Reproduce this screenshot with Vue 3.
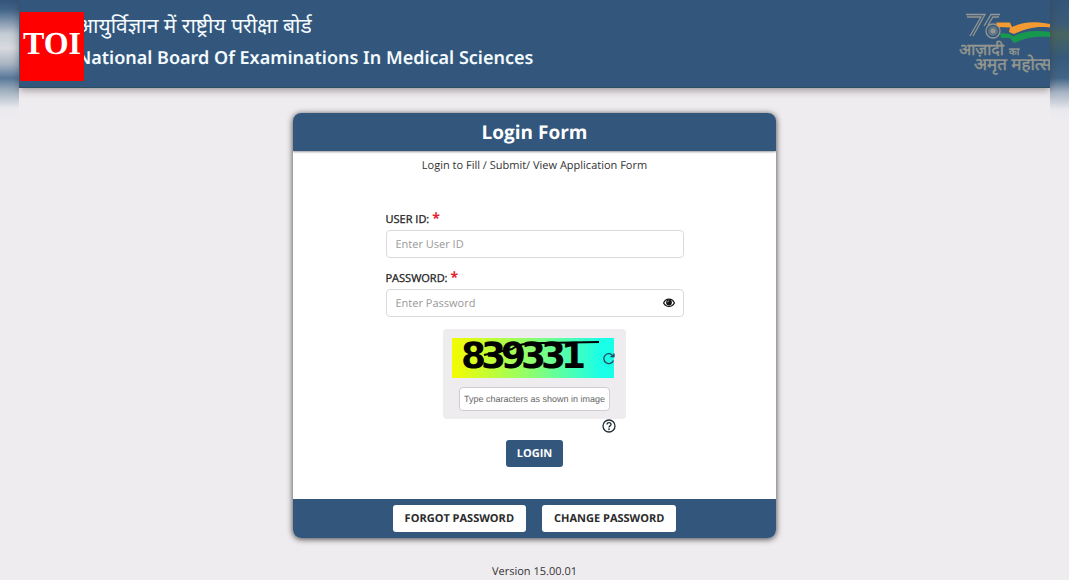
<script setup>
import { ref } from 'vue'

const userId = ref('')
const password = ref('')
const captcha = ref('')
const revealed = ref(false)
const captchaDigits = ['8', '3', '9', '3', '3', '1']
</script>

<template>
  <div class="page">
    <div class="edge edge-left" aria-hidden="true"></div>

    <div class="site">
      <header class="banner">
        <div class="titles">
          <p class="title-hindi" lang="hi">आयुर्विज्ञान में राष्ट्रीय परीक्षा बोर्ड</p>
          <h1 class="title-english">National Board Of Examinations In Medical Sciences</h1>
        </div>
        <div class="toi">TOI</div>
        <svg class="emblem" width="93" height="66" viewBox="0 0 93 66" role="img" aria-label="Azadi ka Amrit Mahotsav">
          <g fill="none" stroke="#95978f" stroke-width="1.3">
            <path d="M9 2.500H28L16 24M10 5H24L13 24" />
            <path d="M43 2.500H34L27 14M42 5H36L31 13" />
            <circle cx="36" cy="19" r="7" />
          </g>
          <circle cx="36" cy="19" r="5" fill="#95978f" opacity=".45" />
          <circle cx="36" cy="19" r="2.500" fill="#95978f" />
          <path d="M39 10.500L53 10.500L55 15C66 10 76 9 93 12V15.500C77 14 69 17 57 22L52 20L53 15.500L41 15Z" fill="#f49a32" />
          <path d="M43 21L53 22L56 24.500C67 19 77 18 93 20V25C77 24 69 26 57 31L53 26L44 26Z" fill="#16994f" />
          <g class="emblem-text" lang="hi">
            <text x="2" y="43" font-size="16">आज़ादी</text>
            <text x="52" y="43" font-size="10">का</text>
            <text x="17" y="58" font-size="17">अमृत महोत्स</text>
          </g>
        </svg>
      </header>

      <main class="content">
        <form class="card" @submit.prevent>
          <h2 class="card-head">Login Form</h2>
          <div class="card-body">
            <p class="intro">Login to Fill / Submit/ View Application Form</p>
            <div class="fields">
              <div class="field">
                <label for="user-id">USER ID: <span class="required">*</span></label>
                <input id="user-id" v-model="userId" class="box" type="text" placeholder="Enter User ID" />
              </div>
              <div class="field">
                <label for="password">PASSWORD: <span class="required">*</span></label>
                <div class="password-box">
                  <input id="password" v-model="password" class="box" :type="revealed ? 'text' : 'password'" placeholder="Enter Password" />
                  <button class="icon-button eye" type="button" aria-label="Show password" @click="revealed = !revealed">
                    <svg width="12" height="10" viewBox="0 0 12 10">
                      <path d="M.6 5C3-.1 9-.1 11.400 5C9 9.600 3 9.600 .6 5Z" fill="#fff" stroke="#151515" stroke-width="1.200" />
                      <circle cx="6" cy="4.500" r="2.900" fill="#151515" />
                      <path d="M4.500 4.300C4.500 3.400 5 2.900 5.900 2.900" fill="none" stroke="#fff" stroke-width=".6" />
                    </svg>
                  </button>
                </div>
              </div>
            </div>

            <div class="captcha">
              <div class="captcha-picture">
                <svg width="150" height="40" viewBox="0 0 150 40" role="img" aria-label="Verification code">
                  <text class="captcha-digits" y="30">
                    <tspan v-for="(digit, i) in captchaDigits" :key="i" :x="9 + i * 20">{{ digit }}</tspan>
                  </text>
                  <path d="M32 17L60 11C68 5 79 5 92 5L147 4" fill="none" stroke="#000" stroke-width="2" />
                </svg>
                <button class="icon-button refresh" type="button" aria-label="New code">
                  <svg width="13" height="13" viewBox="0 0 13 13" fill="none" stroke="#24465a" stroke-width="1.300">
                    <path d="M11 3.800A5 5 0 1 0 11.500 8.500M12 1.500V4.500H8.500" />
                  </svg>
                </button>
              </div>
              <input v-model="captcha" class="captcha-input" type="text" aria-label="Verification code" placeholder="Type characters as shown in image" />
            </div>
            <div class="help-row">
              <button class="icon-button" type="button" aria-label="Help">
                <svg width="14" height="14" viewBox="0 0 14 14" fill="none" stroke="#202b33" stroke-width="1.300">
                  <circle cx="7" cy="7" r="6" />
                  <path d="M5 5.600C5 3 9 3 9 5.500C9 6.900 7 6.900 7 8.400" />
                  <circle cx="7" cy="10.300" r=".3" />
                </svg>
              </button>
            </div>
            <button class="login" type="submit">LOGIN</button>
          </div>
          <div class="card-foot">
            <button class="secondary" type="button">FORGOT PASSWORD</button>
            <button class="secondary" type="button">CHANGE PASSWORD</button>
          </div>
        </form>
        <p class="version">Version 15.00.01</p>
      </main>
    </div>

    <div class="edge edge-right" aria-hidden="true"></div>
  </div>
</template>

<style>
body {
  background: #efecf0;
}
</style>

<style scoped>
* {
  box-sizing: border-box;
}

.page {
  display: flex;
  min-height: 100vh;
  overflow: hidden;
  font-family: "Open Sans", "Noto Sans", sans-serif;
  font-size: 11px;
  text-rendering: geometricPrecision;
  color: #333;
}

.page p,
.page h1,
.page h2 {
  margin: 0;
}

button,
input {
  font-family: inherit;
  text-rendering: inherit;
}

.edge {
  flex: 0 0 19px;
}

.edge-left {
  background: linear-gradient(#335579 0, #43658a 10px, #c4ccd5 34px, #d8dbe0 48px, #a9b5c3 64px, #57789a 78px, #9dadbd 90px, #e9e9ed 108px, #efecf0 120px);
}

.edge-right {
  background: linear-gradient(#335579 0, #3c5b78 24px, #47665f 34px, #365a7b 58px, #426587 78px, #a5b3c2 92px, #e9e9ed 110px, #efecf0 120px);
}

.site {
  flex: 1;
  min-width: 0;
}

.banner {
  position: relative;
  display: flex;
  justify-content: space-between;
  height: 88px;
  padding: 12px 0 0 58px;
  background: #33577c;
  border-bottom: 1px solid #294f60;
  box-shadow: 0 2px 8px rgba(60, 50, 50, 0.5);
}

.titles {
  color: #f4fbff;
  white-space: nowrap;
}

.title-hindi {
  font-family: "Noto Sans", "Noto Sans Devanagari", sans-serif;
  font-size: 21px;
  line-height: 29px;
}

.title-english {
  font-family: "Noto Sans", sans-serif;
  font-size: 18px;
  font-weight: 600;
  line-height: 34px;
}

.toi {
  position: absolute;
  top: 12px;
  left: 1px;
  width: 64px;
  height: 69px;
  background: #fe0000;
  color: #fff;
  font: bold 32px/62px "Liberation Serif", serif;
  text-align: center;
}

.emblem {
  flex: none;
  overflow: hidden;
}

.emblem-text {
  font-family: "Noto Sans", "Noto Sans Devanagari", sans-serif;
  fill: #95978f;
  stroke: #95978f;
  stroke-width: 0.4px;
}

.content {
  display: flex;
  flex-direction: column;
  align-items: center;
  padding-top: 25px;
}

.card {
  width: 100%;
  max-width: 483px;
  border-radius: 8px;
  background: #fff;
  box-shadow: 0 1px 6px rgba(0, 0, 0, 0.75);
  overflow: hidden;
}

.card-head {
  background: #33577c;
  color: #fff;
  font-size: 19px;
  font-weight: 700;
  line-height: 38px;
  text-align: center;
  box-shadow: 0 1px 2px rgba(0, 0, 0, 0.4);
}

.card-body {
  display: flex;
  flex-direction: column;
  align-items: center;
  padding: 5px 16px 32px;
}

.intro {
  line-height: 20px;
}

.fields {
  display: flex;
  flex-direction: column;
  gap: 11px;
  width: 100%;
  max-width: 298px;
  margin-top: 34px;
}

.field label {
  display: block;
  font-weight: 500;
  color: #222;
  line-height: 20px;
  -webkit-text-stroke: 0.3px #222;
}

.required {
  color: #e3202c;
  font-size: 14px;
  font-weight: 700;
  line-height: 14px;
  -webkit-text-stroke: 0;
}

.box {
  display: block;
  width: 100%;
  height: 28px;
  padding: 0 9px;
  border: 1px solid #dcd8df;
  border-radius: 4px;
  background: #fff;
  color: #333;
  font-size: 11px;
}

.box::placeholder {
  color: #999;
}

.password-box {
  position: relative;
}

.icon-button {
  display: block;
  padding: 0;
  border: 0;
  background: none;
}

.icon-button svg {
  display: block;
}

.eye {
  position: absolute;
  top: 9px;
  right: 9px;
}

.captcha {
  width: 183px;
  margin-top: 12px;
  padding: 9px 9px 8px;
  border-radius: 4px;
  background: #efecf0;
}

.captcha-picture {
  display: flex;
  align-items: center;
  width: 162px;
  height: 40px;
  background: linear-gradient(90deg, #f4fb00, #8aff72 50%, #19ffe8 92%);
}

.captcha-picture > svg {
  flex: none;
  overflow: visible;
}

.captcha-digits {
  font-family: "DejaVu Sans", sans-serif;
  font-size: 36px;
  font-weight: 700;
}

.captcha-input {
  display: block;
  width: 151px;
  height: 24px;
  margin: 9px 0 0 7px;
  padding: 0 4px;
  border: 1px solid #cfccd2;
  border-radius: 4px;
  background: #fff;
  font: 9px "Liberation Sans", sans-serif;
}

.captcha-input::placeholder {
  color: #666;
}

.help-row {
  display: flex;
  justify-content: flex-end;
  width: 183px;
  padding-right: 10px;
}

.login {
  height: 27px;
  margin-top: 7px;
  padding: 0 11px;
  border: 0;
  border-radius: 3px;
  background: #33577c;
  color: #fff;
  font-size: 11px;
  font-weight: 700;
}

.card-foot {
  display: flex;
  justify-content: center;
  gap: 16px;
  padding: 6px 16px;
  background: #33577c;
}

.secondary {
  height: 27px;
  padding: 0 12px;
  border: 0;
  border-radius: 3px;
  background: #fff;
  color: #2b2b2b;
  font-size: 11px;
  font-weight: 700;
}

.page .version {
  margin-top: 24px;
  line-height: 20px;
}
</style>
